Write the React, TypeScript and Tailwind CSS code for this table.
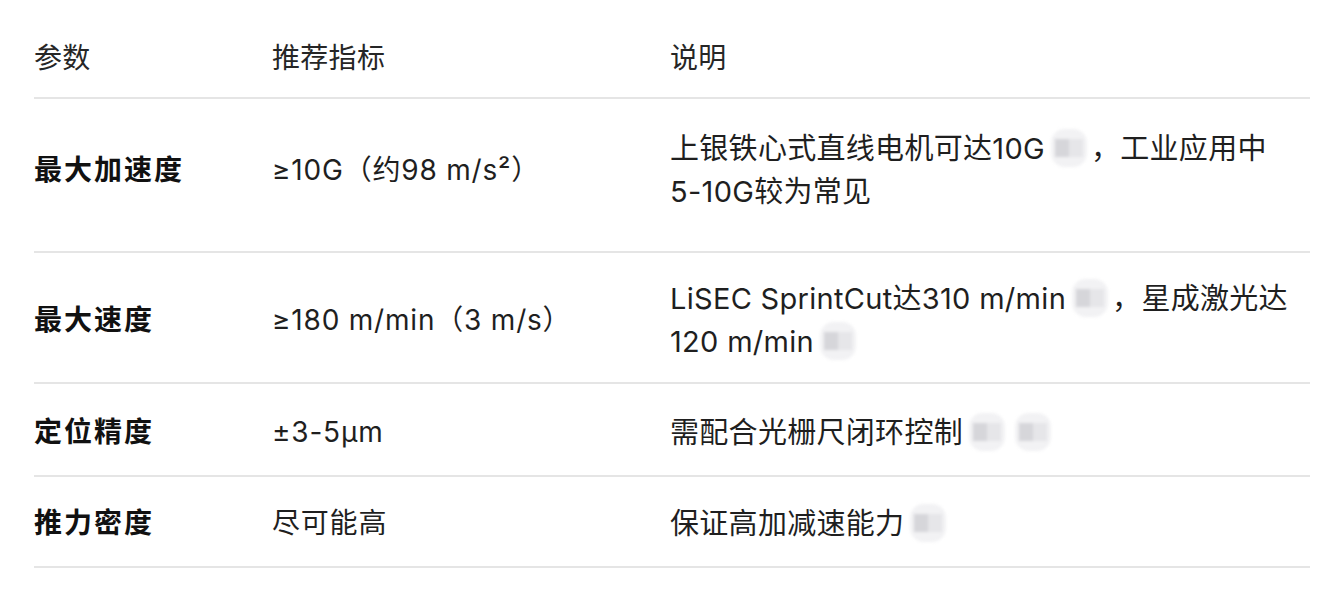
import React from 'react';

const Cite: React.FC = () => (
  <span className="inline-flex items-center align-middle ml-[6px] mr-[4px] -mt-[6px] rounded-[14px] bg-[#f2f2f4] blur-[1.5px] h-[38px] px-[4px]">
    <span className="w-[14px] h-[18px] bg-[#d6d6da]" />
    <span className="w-[14px] h-[18px] bg-[#e6e6e9]" />
  </span>
);

interface Row {
  name: string;
  value: string;
  note: React.ReactNode;
  pad: string;
}

const rows: Row[] = [
  {
    name: '最大加速度',
    value: '≥10G（约98 m/s²）',
    note: (
      <>
        上银铁心式直线电机可达10G<Cite />，工业应用中<span className="whitespace-nowrap">5-10G较为常见</span>
      </>
    ),
    pad: 'pt-[28px] pb-[38px]',
  },
  {
    name: '最大速度',
    value: '≥180 m/min（3 m/s）',
    note: (
      <>
        LiSEC SprintCut达310 m/min<Cite />，星成激光达<span className="whitespace-nowrap">120 m/min<Cite /></span>
      </>
    ),
    pad: 'pt-[24px] pb-[19px]',
  },
  {
    name: '定位精度',
    value: '±3-5μm',
    note: (
      <>
        需配合光栅尺闭环控制<Cite />
        <Cite />
      </>
    ),
    pad: 'pt-[27px] pb-[21px]',
  },
  {
    name: '推力密度',
    value: '尽可能高',
    note: (
      <>
        保证高加减速能力<Cite />
      </>
    ),
    pad: 'pt-[25px] pb-[21px]',
  },
];

const App: React.FC = () => {
  return (
    <div
      className="min-h-screen bg-white text-[28px] leading-[43px] text-[#1f1f1f] px-[34px] pt-[14px] tracking-[0.8px]"
      style={{ fontFamily: 'Inter, "Noto Sans CJK SC", sans-serif' }}
    >
      <div className="w-[1276px]">
        <div className="grid grid-cols-[238px_398px_1fr] pt-[23px] pb-[17px] border-b-2 border-[#e5e5e5] text-[#262626] tracking-[0.3px]">
          <div>参数</div>
          <div>推荐指标</div>
          <div>说明</div>
        </div>
        {rows.map((r) => (
          <div
            key={r.name}
            className={`grid grid-cols-[238px_398px_1fr] border-b-2 border-[#e5e5e5] items-center ${r.pad}`}
          >
            <div className="font-bold text-[#111111] tracking-[2px]">{r.name}</div>
            <div>{r.value}</div>
            <div className="text-[29px] tracking-[0.3px]">{r.note}</div>
          </div>
        ))}
      </div>
    </div>
  );
};

export default App;
